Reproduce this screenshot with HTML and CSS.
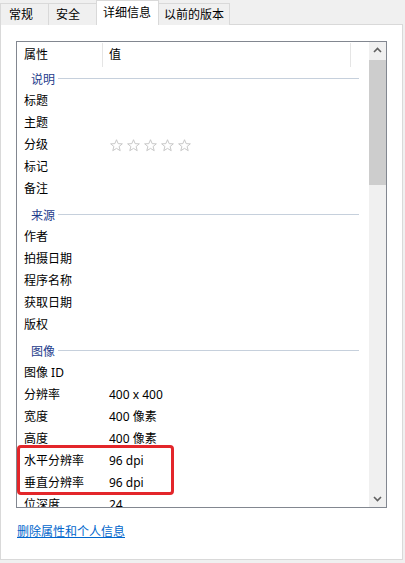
FILE: index.html
```html
<!DOCTYPE html>
<html lang="zh-CN">
<head>
    <meta charset="UTF-8">
    <meta name="viewport" content="width=device-width, initial-scale=1.0">
    <title>属性 - 详细信息</title>
    <link rel="stylesheet" href="styles.css">
</head>
<body>
    <div class="tabs">
        <div class="tab tab-general">常规</div>
        <div class="tab tab-security">安全</div>
        <div class="tab tab-details active">详细信息</div>
        <div class="tab tab-previous">以前的版本</div>
    </div>
    <div class="panel">
        <div class="list">
            <div class="list-main">
                <div class="list-header">
                    <div class="col-name">属性</div>
                    <div class="col-value">值</div>
                    <div class="col-rest"></div>
                </div>
                <div class="group first"><span>说明</span></div>
                <div class="row"><div class="col-name">标题</div><div class="col-value"></div></div>
                <div class="row"><div class="col-name">主题</div><div class="col-value"></div></div>
                <div class="row">
                    <div class="col-name">分级</div>
                    <div class="col-value stars">
                        <svg viewBox="0 0 14 14"><polygon points="7,0.8 8.8,5 13.3,5.2 9.8,8.1 11,12.6 7,10.1 3,12.6 4.2,8.1 0.7,5.2 5.2,5"/></svg>
                        <svg viewBox="0 0 14 14"><polygon points="7,0.8 8.8,5 13.3,5.2 9.8,8.1 11,12.6 7,10.1 3,12.6 4.2,8.1 0.7,5.2 5.2,5"/></svg>
                        <svg viewBox="0 0 14 14"><polygon points="7,0.8 8.8,5 13.3,5.2 9.8,8.1 11,12.6 7,10.1 3,12.6 4.2,8.1 0.7,5.2 5.2,5"/></svg>
                        <svg viewBox="0 0 14 14"><polygon points="7,0.8 8.8,5 13.3,5.2 9.8,8.1 11,12.6 7,10.1 3,12.6 4.2,8.1 0.7,5.2 5.2,5"/></svg>
                        <svg viewBox="0 0 14 14"><polygon points="7,0.8 8.8,5 13.3,5.2 9.8,8.1 11,12.6 7,10.1 3,12.6 4.2,8.1 0.7,5.2 5.2,5"/></svg>
                    </div>
                </div>
                <div class="row"><div class="col-name">标记</div><div class="col-value"></div></div>
                <div class="row"><div class="col-name">备注</div><div class="col-value"></div></div>
                <div class="group"><span>来源</span></div>
                <div class="row"><div class="col-name">作者</div><div class="col-value"></div></div>
                <div class="row"><div class="col-name">拍摄日期</div><div class="col-value"></div></div>
                <div class="row"><div class="col-name">程序名称</div><div class="col-value"></div></div>
                <div class="row"><div class="col-name">获取日期</div><div class="col-value"></div></div>
                <div class="row"><div class="col-name">版权</div><div class="col-value"></div></div>
                <div class="group"><span>图像</span></div>
                <div class="row"><div class="col-name">图像 ID</div><div class="col-value"></div></div>
                <div class="row"><div class="col-name">分辨率</div><div class="col-value">400 x 400</div></div>
                <div class="row"><div class="col-name">宽度</div><div class="col-value">400 像素</div></div>
                <div class="row"><div class="col-name">高度</div><div class="col-value">400 像素</div></div>
                <div class="highlight">
                    <div class="row"><div class="col-name">水平分辨率</div><div class="col-value">96 dpi</div></div>
                    <div class="row"><div class="col-name">垂直分辨率</div><div class="col-value">96 dpi</div></div>
                </div>
                <div class="row"><div class="col-name">位深度</div><div class="col-value">24</div></div>
            </div>
            <div class="scrollbar">
                <div class="scroll-btn">
                    <svg viewBox="0 0 17 17"><polyline points="5,10 8.5,6.5 12,10"/></svg>
                </div>
                <div class="scroll-track">
                    <div class="scroll-thumb"></div>
                </div>
                <div class="scroll-btn">
                    <svg viewBox="0 0 17 17"><polyline points="5,7 8.5,10.5 12,7"/></svg>
                </div>
            </div>
        </div>
        <a class="remove-link" href="#">删除属性和个人信息</a>
    </div>
</body>
</html>
```

FILE: styles.css
```css
body {
    margin: 0;
    background-color: #f0f0f0;
    font-family: "Noto Sans", "Noto Sans CJK SC", sans-serif;
    font-size: 12px;
    color: #000;
    width: 403px;
}
.tabs {
    display: flex;
    align-items: flex-end;
    height: 25px;
    position: relative;
    z-index: 1;
}
.tab {
    box-sizing: border-box;
    height: 22px;
    line-height: 21px;
    padding-left: 8px;
    border: 1px solid #d9d9d9;
    border-bottom: none;
    border-left: none;
    background-color: #f0f0f0;
}
.tab-general {
    width: 49px;
    border-left: 1px solid #d9d9d9;
}
.tab-security {
    width: 48px;
    padding-left: 7px;
}
.tab-details {
    width: 62px;
    padding-left: 6px;
}
.tab-previous {
    width: 71px;
    padding-left: 5px;
}
.tab.active {
    height: 25px;
    line-height: 23px;
    background-color: #fff;
    border-left: 1px solid #d9d9d9;
    margin-left: -1px;
    width: 63px;
}
.panel {
    box-sizing: border-box;
    height: 536px;
    margin-top: -1px;
    background-color: #fff;
    border: 1px solid #d9d9d9;
    padding: 16px 0 0 15px;
}
.list {
    display: flex;
    box-sizing: border-box;
    width: 371px;
    height: 467px;
    border: 1px solid #828790;
    overflow: hidden;
}
.list-main {
    flex: 1;
    padding-top: 1px;
    overflow: hidden;
}
.list-header {
    display: flex;
    height: 24px;
    line-height: 24px;
    margin-top: -1px;
    padding-top: 1px;
}
.list-header .col-name {
    border-right: 1px solid #e5e5e5;
    width: 78px;
}
.list-header .col-value {
    width: 241px;
    border-right: 1px solid #e5e5e5;
}
.col-name {
    box-sizing: content-box;
    width: 79px;
    padding-left: 7px;
    flex-shrink: 0;
    white-space: nowrap;
}
.col-value {
    padding-left: 6px;
    white-space: nowrap;
}
.row {
    display: flex;
    height: 22px;
    line-height: 22px;
}
.group {
    display: flex;
    align-items: center;
    box-sizing: border-box;
    height: 26px;
    padding: 3px 10px 0 14px;
    color: #1e3c8c;
}
.group.first {
    height: 23px;
    padding-top: 0;
}
.group::after {
    content: "";
    flex: 1;
    height: 1px;
    margin-left: 3px;
    background-color: #c6d0dc;
}
.stars {
    display: flex;
    align-items: center;
    gap: 4px;
    padding-left: 7px;
}
.stars svg {
    width: 13px;
    height: 13px;
    fill: none;
    stroke: #c4c4c4;
    stroke-width: 1;
}
.highlight {
    position: relative;
}
.highlight::after {
    content: "";
    position: absolute;
    left: 0;
    top: -5px;
    width: 151px;
    height: 44px;
    border: 3px solid #e3262a;
    border-radius: 4px;
}
.scrollbar {
    width: 17px;
    display: flex;
    flex-direction: column;
    background-color: #f0f0f0;
}
.scroll-btn {
    height: 17px;
}
.scroll-btn svg {
    width: 17px;
    height: 17px;
    fill: none;
    stroke: #606060;
    stroke-width: 1.6;
}
.scroll-track {
    flex: 1;
}
.scroll-thumb {
    height: 125px;
    margin-top: 1px;
    background-color: #cdcdcd;
}
.remove-link {
    display: inline-block;
    margin: 16px 0 0 1px;
    color: #0066cc;
    text-decoration: underline;
    line-height: 16px;
}
```
